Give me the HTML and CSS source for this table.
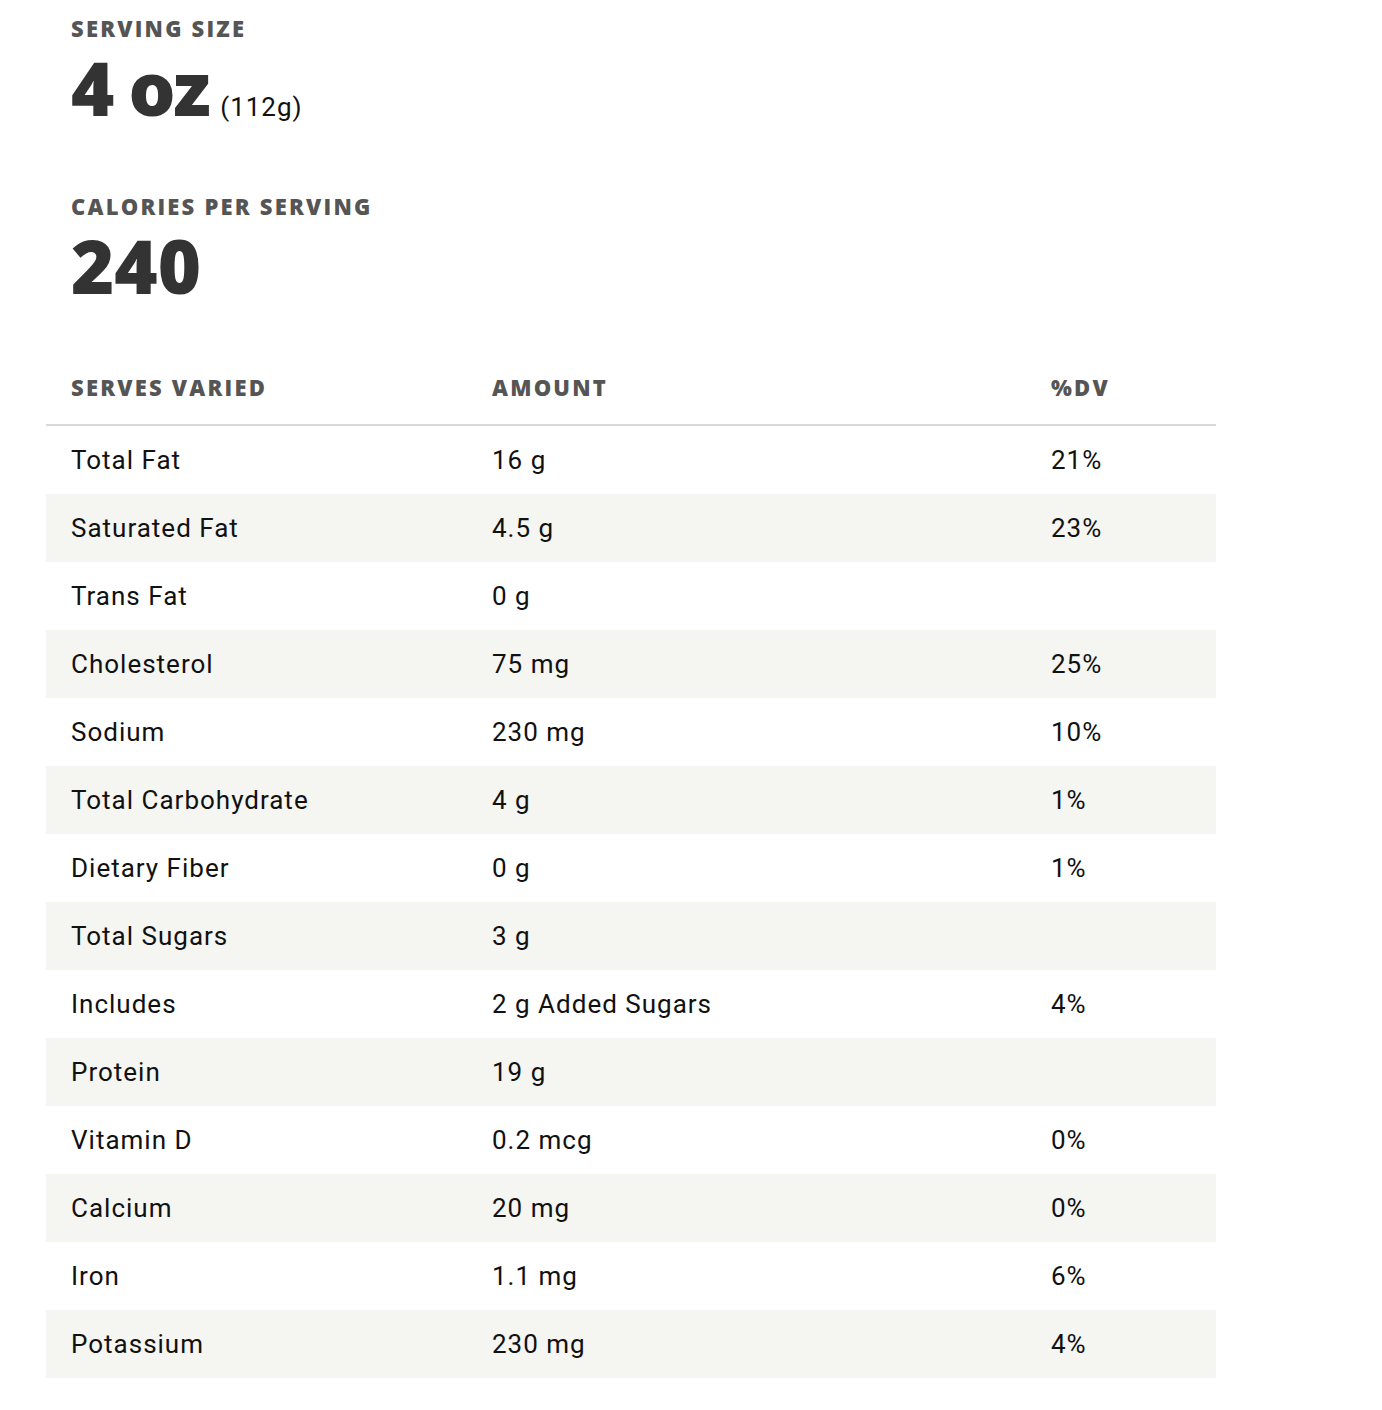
FILE: index.html
```html
<!DOCTYPE html>
<html>
<head>
<meta charset="utf-8">
<link rel="stylesheet" href="styles.css">
</head>
<body>
<div class="wrap">
  <section class="stat">
    <div class="label">Serving Size</div>
    <div class="big big-size">4 oz<span class="unit">(112g)</span></div>
  </section>
  <section class="stat stat-cal">
    <div class="label">Calories per Serving</div>
    <div class="big">240</div>
  </section>
  <div class="table">
    <div class="row head"><div>Serves Varied</div><div>Amount</div><div>%DV</div></div>
    <div class="row"><div>Total Fat</div><div>16 g</div><div>21%</div></div>
    <div class="row"><div>Saturated Fat</div><div>4.5 g</div><div>23%</div></div>
    <div class="row"><div>Trans Fat</div><div>0 g</div><div></div></div>
    <div class="row"><div>Cholesterol</div><div>75 mg</div><div>25%</div></div>
    <div class="row"><div>Sodium</div><div>230 mg</div><div>10%</div></div>
    <div class="row"><div>Total Carbohydrate</div><div>4 g</div><div>1%</div></div>
    <div class="row"><div>Dietary Fiber</div><div>0 g</div><div>1%</div></div>
    <div class="row"><div>Total Sugars</div><div>3 g</div><div></div></div>
    <div class="row"><div>Includes</div><div>2 g Added Sugars</div><div>4%</div></div>
    <div class="row"><div>Protein</div><div>19 g</div><div></div></div>
    <div class="row"><div>Vitamin D</div><div>0.2 mcg</div><div>0%</div></div>
    <div class="row"><div>Calcium</div><div>20 mg</div><div>0%</div></div>
    <div class="row"><div>Iron</div><div>1.1 mg</div><div>6%</div></div>
    <div class="row"><div>Potassium</div><div>230 mg</div><div>4%</div></div>
  </div>
</div>
</body>
</html>
```
FILE: styles.css
```css
html, body {
  margin: 0;
  padding: 0;
  background: #fff;
}
body {
  font-family: Roboto, "Liberation Sans", sans-serif;
  color: #111;
}
.wrap {
  width: 1170px;
  margin-left: 46px;
  padding-top: 14px;
}
.stat {
  padding-left: 25px;
}
.label {
  font-family: "Open Sans", Roboto, sans-serif;
  font-weight: 800;
  font-size: 22px;
  letter-spacing: 2.2px;
  text-transform: uppercase;
  color: #555;
  line-height: 28px;
}
.big {
  font-family: "Open Sans", Roboto, sans-serif;
  font-weight: 800;
  font-size: 74px;
  color: #333;
  line-height: 84px;
  margin-top: 4px;
}
.big-size {
  letter-spacing: -2.5px;
}
.unit {
  font-family: Roboto, sans-serif;
  font-weight: 400;
  font-size: 26px;
  letter-spacing: 1px;
  color: #111;
  margin-left: 12px;
}
.stat-cal {
  margin-top: 43px;
}
.table {
  margin-top: 65px;
}
.row {
  display: grid;
  grid-template-columns: 421px 559px 190px;
  height: 68px;
  align-items: center;
  font-size: 26px;
  letter-spacing: 1px;
}
.row > div {
  padding-left: 25px;
}
.row:nth-child(odd):not(.head) {
  background: #f5f5f1;
}
.row.head {
  height: 51px;
  align-items: start;
  border-bottom: 2px solid #d9d9d9;
  font-family: "Open Sans", Roboto, sans-serif;
  font-weight: 800;
  font-size: 22px;
  letter-spacing: 2.2px;
  text-transform: uppercase;
  color: #555;
  line-height: 28px;
}
```
